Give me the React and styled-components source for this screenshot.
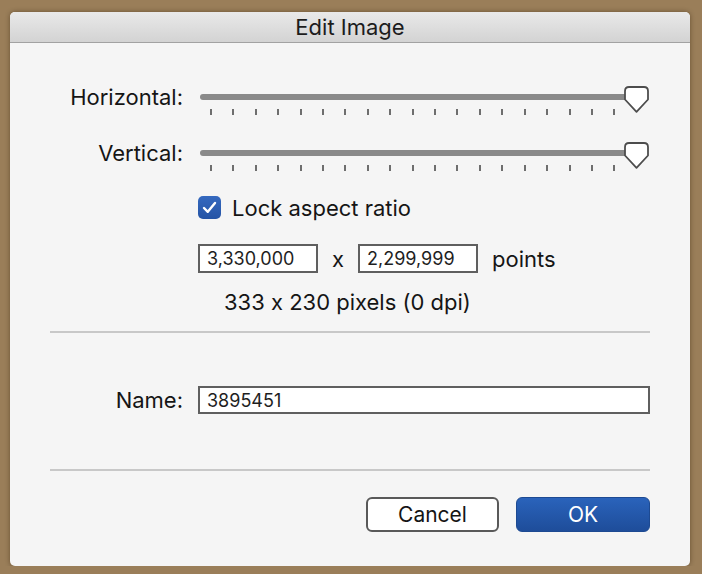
import React from 'react'
import styled, { createGlobalStyle } from 'styled-components'

const GlobalStyle = createGlobalStyle`
  html, body {
    margin: 0;
    padding: 0;
    background: #9a7e59;
  }
  body {
    font-family: Inter, "Liberation Sans", sans-serif;
    font-feature-settings: "calt" 0;
    color: #151515;
  }
`

function Slider() {
  const ticks = Array.from({ length: 20 })
  return (
    <SliderBox>
      <Track />
      <Ticks>
        {ticks.map((_, i) => (
          <Tick key={i} $hidden={i === ticks.length - 1} />
        ))}
      </Ticks>
      <Thumb width="25" height="27" viewBox="0 0 25 27">
        <path
          d="M5 1 H20 Q24 1 24 5 V13.5 L12.5 25.8 L1 13.5 V5 Q1 1 5 1 Z"
          fill="#ffffff"
          stroke="#4d4d4d"
          strokeWidth="1.8"
          strokeLinejoin="round"
        />
      </Thumb>
    </SliderBox>
  )
}

export default function App() {
  return (
    <>
      <GlobalStyle />
      <Window>
        <TitleBar>Edit Image</TitleBar>
        <Content>
          <FieldRow>
            <Label>Horizontal:</Label>
            <Slider />
          </FieldRow>
          <FieldRow $gap={27}>
            <Label>Vertical:</Label>
            <Slider />
          </FieldRow>

          <Indented>
            <CheckRow>
              <Checkbox>
                <svg width="15" height="13" viewBox="0 0 15 13">
                  <path
                    d="M2 7 L5.8 10.8 L13 2"
                    fill="none"
                    stroke="#ffffff"
                    strokeWidth="2.4"
                    strokeLinecap="round"
                    strokeLinejoin="round"
                  />
                </svg>
              </Checkbox>
              <Text>Lock aspect ratio</Text>
            </CheckRow>

            <SizeRow>
              <TextField $width="120px">3,330,000</TextField>
              <Text>x</Text>
              <TextField $width="120px">2,299,999</TextField>
              <Text>points</Text>
            </SizeRow>

            <Info>333 x 230 pixels (0 dpi)</Info>
          </Indented>

          <Separator $top={18} />

          <FieldRow $gap={53} $center>
            <Label>Name:</Label>
            <TextField $height="28px">3895451</TextField>
          </FieldRow>

          <Separator $top={55} />

          <Buttons>
            <Button>Cancel</Button>
            <Button $primary>OK</Button>
          </Buttons>
        </Content>
      </Window>
    </>
  )
}

const Window = styled.div`
  width: 680px;
  height: 554px;
  margin: 12px 0 0 10px;
  background: #f5f5f5;
  border-radius: 5px;
  overflow: hidden;
  display: flex;
  flex-direction: column;
  box-shadow: 0 0 5px rgba(40, 25, 5, 0.45);
`

const TitleBar = styled.div`
  height: 30px;
  flex-shrink: 0;
  display: flex;
  align-items: center;
  justify-content: center;
  font-size: 22px;
  color: #1c1c1c;
  background: linear-gradient(#e9e9e9, #d3d3d3);
  border-bottom: 1px solid #a2a2a2;
`

const Content = styled.div`
  padding: 43px 40px 0;
  display: flex;
  flex-direction: column;
`

const FieldRow = styled.div`
  display: grid;
  grid-template-columns: 133px 1fr;
  column-gap: 15px;
  align-items: ${p => (p.$center ? 'center' : 'start')};
  margin-top: ${p => p.$gap || 0}px;
`

const Label = styled.div`
  text-align: right;
  font-size: 22px;
  line-height: 22px;
`

const Text = styled.span`
  font-size: 22px;
  line-height: 22px;
`

const SliderBox = styled.div`
  position: relative;
  height: 29px;
  display: flex;
  flex-direction: column;
`

const Track = styled.div`
  height: 6px;
  margin: 8px 14px 0 2px;
  border-radius: 3px;
  background: #8a8a8a;
`

const Ticks = styled.div`
  display: flex;
  justify-content: space-between;
  margin-top: 9px;
  padding: 0 12px 0 12px;
`

const Tick = styled.div`
  width: 2px;
  height: 6px;
  background: #6e6e6e;
  visibility: ${p => (p.$hidden ? 'hidden' : 'visible')};
`

const Thumb = styled.svg`
  position: absolute;
  top: 0;
  right: 1px;
`

const Indented = styled.div`
  margin-left: 148px;
  display: flex;
  flex-direction: column;
`

const CheckRow = styled.div`
  margin-top: 25px;
  display: flex;
  align-items: center;
  gap: 11px;
`

const Checkbox = styled.div`
  width: 23px;
  height: 23px;
  border-radius: 5px;
  background: linear-gradient(#3569bf, #2554a5);
  display: flex;
  align-items: center;
  justify-content: center;
`

const SizeRow = styled.div`
  margin-top: 25px;
  display: flex;
  align-items: center;
  gap: 14px;
`

const TextField = styled.div`
  box-sizing: border-box;
  width: ${p => p.$width || '100%'};
  height: ${p => p.$height || '29px'};
  border: 2px solid #5f5f5f;
  background: #ffffff;
  padding: 0 7px;
  display: flex;
  align-items: center;
  font-size: 18px;
  color: #1e1e1e;
`

const Info = styled.div`
  margin-top: 18px;
  padding-left: 26px;
  font-size: 22px;
  line-height: 22px;
`

const Separator = styled.div`
  height: 2px;
  margin-top: ${p => p.$top}px;
  background: #c8c8c8;
`

const Buttons = styled.div`
  margin-top: 26px;
  display: flex;
  justify-content: flex-end;
  gap: 17px;
`

const Button = styled.button`
  box-sizing: border-box;
  width: ${p => (p.$primary ? '134px' : '133px')};
  height: 35px;
  border-radius: 6px;
  font-family: inherit;
  font-size: 21px;
  color: ${p => (p.$primary ? '#ffffff' : '#151515')};
  background: ${p => (p.$primary ? 'linear-gradient(#2a63bb, #1e4d9a)' : '#ffffff')};
  border: ${p => (p.$primary ? '1px solid #1d4a92' : '2px solid #595959')};
  padding: 0;
`
